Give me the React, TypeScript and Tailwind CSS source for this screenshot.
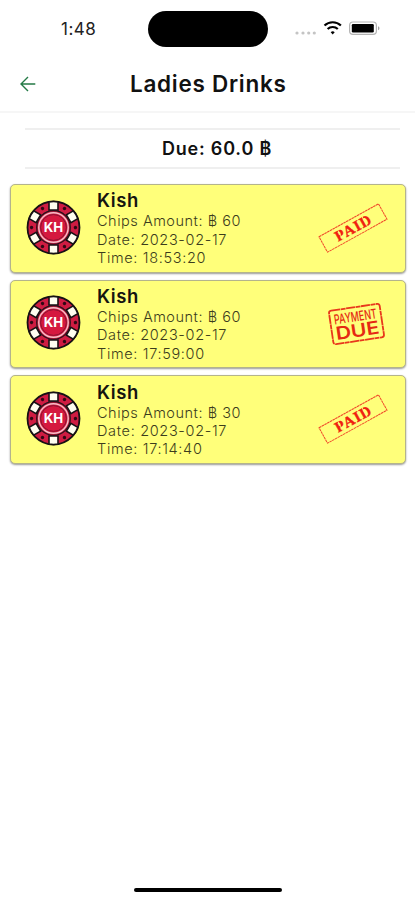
type Drink = {
  id: number;
  name: string;
  amount: number;
  date: string;
  time: string;
  paid: boolean;
};

const drinks: Drink[] = [
  { id: 1, name: "Kish", amount: 60, date: "2023-02-17", time: "18:53:20", paid: true },
  { id: 2, name: "Kish", amount: 60, date: "2023-02-17", time: "17:59:00", paid: false },
  { id: 3, name: "Kish", amount: 30, date: "2023-02-17", time: "17:14:40", paid: true },
];

const StatusBar = () => (
  <div className="flex h-[58px] items-start">
    <span className="mt-[17px] w-[148px] pl-[61px] text-[17px] leading-6 tracking-[0.5px] text-[#222]">
      1:48
    </span>
    <div className="mt-[11px] h-[36px] w-[120px] rounded-full bg-black" />
    {/* signal, wifi, battery */}
    <svg className="mt-[18px] ml-[26px]" width="88" height="20" viewBox="0 0 88 20">
      <g fill="#c4c4c4">
        <circle cx="3" cy="15" r="1.6" />
        <circle cx="9" cy="15" r="1.6" />
        <circle cx="14.7" cy="15" r="1.6" />
        <circle cx="20.3" cy="15" r="1.6" />
      </g>
      <g fill="none" stroke="#000" strokeWidth="2.1">
        <path d="M30.5 7.6a11.6 11.6 0 0 1 16.4 0" />
        <path d="M33.6 11.1a7.2 7.2 0 0 1 10.2 0" />
      </g>
      <path d="M38.7 16.4l-2-2.1a2.9 2.9 0 0 1 4 0z" fill="#000" />
      <rect x="55.6" y="4" width="26.8" height="12.4" rx="3.4" fill="none" stroke="#b3b3b3" strokeWidth="1.2" />
      <rect x="57.8" y="6" width="22" height="8.4" rx="1.2" fill="#000" />
      <path d="M84 8.2c2 .7 2 3.3 0 4z" fill="#a3a3a3" />
    </svg>
  </div>
);

// Poker chip with six white edge blocks
const Chip = () => (
  <svg width="55" height="55" viewBox="-27.5 -27.5 55 55" className="-mt-[2px] shrink-0">
    <circle r="26" fill="#cf1c42" stroke="#171114" strokeWidth="1.8" />
    {[0, 60, 120, 180, 240, 300].map((angle) => (
      <g key={angle} transform={`rotate(${angle})`}>
        <path
          d="M-4.5 -25.5V-17.5H4.5V-25.5Q0 -26.4 -4.5 -25.5Z"
          fill="#fffdf0"
          stroke="#171114"
          strokeWidth="1.6"
        />
        <circle cx="11" cy="-19" r="1.7" fill="#310714" />
      </g>
    ))}
    <circle r="16.8" fill="#cf1c42" stroke="#24121a" strokeWidth="1.2" />
    <circle r="14.7" fill="#d5183f" stroke="#f4c3cb" strokeWidth="1.4" />
    <circle r="12.9" fill="none" stroke="#7e1230" strokeWidth="0.9" />
    <text
      y="4.7"
      textAnchor="middle"
      textLength="19.5"
      lengthAdjust="spacingAndGlyphs"
      fill="#fff"
      fontSize="13.5"
      fontWeight="700"
    >
      KH
    </text>
  </svg>
);

const PaidStamp = () => (
  <svg width="76" height="56" viewBox="-38 -28 76 56" className="-mt-[1px]">
    <g transform="rotate(-29)">
      <rect x="-34" y="-8.8" width="68" height="17.6" fill="none" stroke="#f0482a" strokeWidth="1" strokeDasharray="2.6 0.5" />
      <text
        y="5"
        textAnchor="middle"
        textLength="39"
        fill="#f0200f"
        stroke="#f0200f"
        strokeWidth="0.4"
        fontSize="15"
        fontWeight="700"
        fontFamily="Liberation Serif, serif"
      >
        PAID
      </text>
      {/* stencil cuts */}
      <path d="M-14.4 -6V6M-1.5 -6V0M13.4 -6V6" stroke="#ffff7a" strokeWidth="0.8" />
    </g>
  </svg>
);

const DueStamp = () => (
  <svg width="76" height="60" viewBox="-41.5 -30 76 60" className="overflow-visible">
    <g transform="rotate(-8.5)" fill="#e52a12" textAnchor="middle">
      <rect x="-25.6" y="-16.9" width="51.2" height="33.8" rx="2.5" fill="none" stroke="#e8381c" strokeWidth="1.8" strokeDasharray="9 0.6 5 0.5" />
      <text y="-2.8" textLength="43" lengthAdjust="spacingAndGlyphs" fontSize="13.5" fontWeight="500">
        PAYMENT
      </text>
      <text y="12.8" textLength="44" lengthAdjust="spacingAndGlyphs" fontSize="18" fontWeight="600">
        DUE
      </text>
    </g>
  </svg>
);

const DrinkCard = ({ drink }: { drink: Drink }) => (
  <article className="flex h-[88.5px] items-center rounded-[5px] border border-[#b4b48c] bg-[#ffff7a] pr-[14px] pl-[15px] shadow-[0_1px_2px_rgba(0,0,0,0.4)]">
    <Chip />
    <div className="ml-[16px] flex-1">
      <h2 className="text-[18.5px] leading-[23px] font-semibold tracking-[0.6px] text-[#151510]">
        {drink.name}
      </h2>
      <div className="text-[14.5px] leading-[18.4px] font-light tracking-[0.66px] text-[#3c3c1c]">
        <p className="tracking-[0.52px]">Chips Amount: ฿ {drink.amount}</p>
        <p>Date: {drink.date}</p>
        <p>Time: {drink.time}</p>
      </div>
    </div>
    <div className="flex w-[76px] justify-center">
      {drink.paid ? <PaidStamp /> : <DueStamp />}
    </div>
  </article>
);

const App = () => {
  return (
    <main className="flex h-[900px] w-[415px] flex-col overflow-hidden bg-white font-['Inter','Noto_Sans',sans-serif] text-[#111]">
      <StatusBar />

      {/* Header */}
      <header className="flex h-[55px] items-center border-b-2 border-[#f6f6f6]">
        <svg className="-mt-[2px] ml-[19px]" width="18" height="18" viewBox="0 0 18 18" fill="none" stroke="#247a46" strokeWidth="1.4">
          <path d="M16.3 9H2M9 2L2 9l7 7" />
        </svg>
        <h1 className="-mt-[2px] ml-[93px] text-[22.5px] leading-7 font-semibold tracking-[0.73px] whitespace-nowrap">
          Ladies Drinks
        </h1>
      </header>

      {/* Total due */}
      <div className="mt-[15px] mr-[15px] ml-[25px] flex h-[41px] items-center justify-center border-y-2 border-[#efefef] text-[18px] font-semibold tracking-[0.8px]">
        <span className="pl-[9px]">Due: 60.0 ฿</span>
      </div>

      {/* Drinks list */}
      <section className="mt-[15px] flex flex-col gap-[7.2px] pr-[9px] pl-[10px]">
        {drinks.map((drink) => (
          <DrinkCard key={drink.id} drink={drink} />
        ))}
      </section>

      {/* Home indicator */}
      <div className="mt-auto mb-[8px] ml-[134px] h-[4px] w-[148px] rounded-full bg-black" />
    </main>
  );
};

export default App;
